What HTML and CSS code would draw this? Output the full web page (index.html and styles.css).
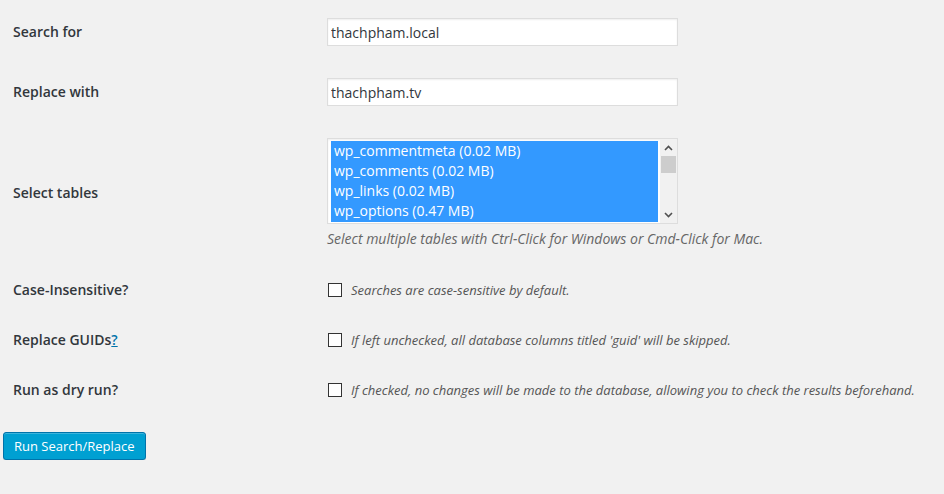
FILE: index.html
```html
<!DOCTYPE html>
<html>
<head>
<meta charset="utf-8">
<link rel="stylesheet" href="styles.css">
</head>
<body>
<form class="sr-form">
  <div class="row row-input">
    <div class="label">Search for</div>
    <div class="field"><input class="text" type="text" value="thachpham.local"></div>
  </div>
  <div class="row row-input">
    <div class="label">Replace with</div>
    <div class="field"><input class="text" type="text" value="thachpham.tv"></div>
  </div>
  <div class="row row-tables">
    <div class="label">Select tables</div>
    <div class="field">
      <div class="listbox">
        <div class="options">
          <div class="opt">wp_commentmeta (0.02 MB)</div>
          <div class="opt">wp_comments (0.02 MB)</div>
          <div class="opt">wp_links (0.02 MB)</div>
          <div class="opt">wp_options (0.47 MB)</div>
        </div>
        <div class="scrollbar">
          <svg class="arrow" width="9" height="6" viewBox="0 0 9 6"><path d="M1 5 L4.5 1.5 L8 5" fill="none" stroke="#505050" stroke-width="1.6"/></svg>
          <div class="track"><div class="thumb"></div></div>
          <svg class="arrow" width="9" height="6" viewBox="0 0 9 6"><path d="M1 1 L4.5 4.5 L8 1" fill="none" stroke="#505050" stroke-width="1.6"/></svg>
        </div>
      </div>
      <p class="description">Select multiple tables with Ctrl-Click for Windows or Cmd-Click for Mac.</p>
    </div>
  </div>
  <div class="row row-check">
    <div class="label">Case-Insensitive?</div>
    <div class="field check"><span class="box"></span><span class="check-desc">Searches are case-sensitive by default.</span></div>
  </div>
  <div class="row row-check">
    <div class="label">Replace GUIDs<a class="help" href="#">?</a></div>
    <div class="field check"><span class="box"></span><span class="check-desc">If left unchecked, all database columns titled 'guid' will be skipped.</span></div>
  </div>
  <div class="row row-check">
    <div class="label">Run as dry run?</div>
    <div class="field check"><span class="box"></span><span class="check-desc">If checked, no changes will be made to the database, allowing you to check the results beforehand.</span></div>
  </div>
  <div class="actions">
    <button type="button" class="button-primary">Run Search/Replace</button>
  </div>
</form>
</body>
</html>
```

FILE: styles.css
```css
html, body {
  margin: 0;
  padding: 0;
  background: #f1f1f1;
}
body {
  font-family: "Open Sans", "Liberation Sans", sans-serif;
  color: #444;
  font-size: 13px;
}
.sr-form {
  padding: 2px 0 0 3px;
}
.row {
  display: flex;
  align-items: center;
}
.label {
  width: 314px;
  padding-left: 10px;
  font-size: 14px;
  font-weight: 600;
  color: #32373c;
  line-height: 1.3;
}
.help {
  color: #0073aa;
  text-decoration: underline;
}
.field {
  flex: 1;
}
.row-input {
  padding: 16px 0;
}
.text {
  box-sizing: border-box;
  width: 351px;
  height: 28px;
  margin: 0;
  padding: 0 3px;
  border: 1px solid #ddd;
  background: #fff;
  box-shadow: inset 0 1px 2px rgba(0,0,0,.07);
  font-family: "Open Sans", "Liberation Sans", sans-serif;
  font-size: 14px;
  color: #32373c;
  outline: none;
}
.row-tables {
  padding: 16px 0;
}
.listbox {
  box-sizing: border-box;
  width: 351px;
  height: 86px;
  border: 1px solid #ddd;
  background: #fff;
  display: flex;
  padding: 2px 0 1px 3px;
  box-shadow: inset 0 1px 2px rgba(0,0,0,.07);
}
.options {
  width: 327px;
  background: #3399ff;
  color: #fff;
  font-size: 14px;
  line-height: 20px;
  overflow: hidden;
}
.opt {
  padding-left: 3px;
  white-space: nowrap;
}
.scrollbar {
  flex: 1;
  display: flex;
  flex-direction: column;
  align-items: center;
  background: #f1f1f1;
  margin: -1px 0 -1px 2px;
  padding: 5px 0 5px;
}
.arrow {
  display: block;
  flex: none;
}
.track {
  flex: 1;
  width: 100%;
  padding-top: 5px;
}
.thumb {
  height: 17px;
  margin: 0 1px;
  background: #cdcdcd;
}
.description {
  margin: 5px 0 0;
  font-style: italic;
  font-size: 14px;
  line-height: 20px;
  color: #666;
}
.row-check {
  height: 50px;
}
.check {
  display: flex;
  align-items: center;
}
.box {
  box-sizing: border-box;
  width: 14px;
  height: 14px;
  border: 1px solid #333;
  background: #fff;
  margin: 0 9px 0 1px;
}
.check-desc {
  font-style: italic;
  font-size: 13px;
  color: #555;
}
.actions {
  padding-top: 17px;
}
.button-primary {
  box-sizing: border-box;
  height: 28px;
  margin: 0;
  padding: 0 10px 1px;
  border: 1px solid #0073aa;
  border-radius: 3px;
  background: #00a0d2;
  box-shadow: inset 0 1px 0 rgba(120,200,230,.5), 0 1px 0 rgba(0,0,0,.15);
  color: #fff;
  font-family: "Open Sans", "Liberation Sans", sans-serif;
  font-size: 13px;
  line-height: 26px;
  cursor: pointer;
}
```
